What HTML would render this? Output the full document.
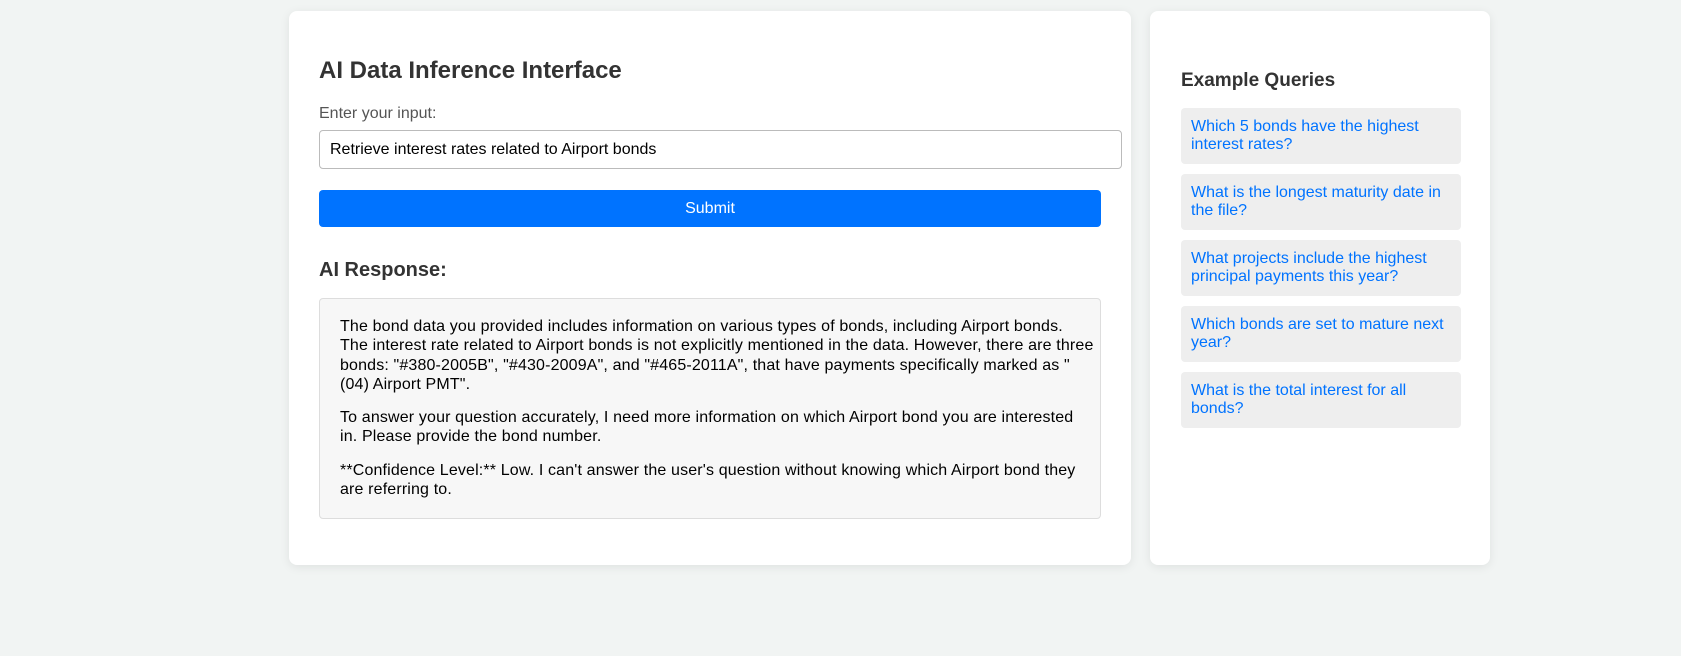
<!DOCTYPE html>
<html><head><meta charset="utf-8"><style>
*{box-sizing:border-box}
body{margin:0;width:1681px;height:656px;background:#f1f4f3;font-family:"Liberation Sans",Arial,sans-serif;position:relative;overflow:hidden}
.card{position:absolute;background:#fff;border-radius:8px;box-shadow:0 2px 10px rgba(0,0,0,0.08)}
.l{left:289px;top:11px;width:842px;height:554px}
.r{left:1150px;top:11px;width:340px;height:554px}
.abs{position:absolute}
h2{margin:0;font-size:24px;color:#333;font-weight:bold}
h3{margin:0;font-size:19px;color:#333;font-weight:bold}
.lab{color:#555;font-size:16px}
.inp{left:30px;top:119px;width:803px;height:39px;border:1px solid #bbb;border-radius:4px;padding:0 10px;line-height:37px;font-size:16px;color:#000}
.btn{left:30px;top:179px;width:782px;height:37px;background:#0073ff;border-radius:4px;color:#fff;text-align:center;line-height:37px;font-size:16px}
.resp{left:30px;top:287px;width:782px;height:221px;background:#f7f7f7;border:1px solid #ddd;border-radius:4px;padding:18px 20px;font-size:16px;letter-spacing:0.15px;line-height:19.3px;color:#000;white-space:nowrap}
.resp p{margin:0 0 14px}
.q{position:absolute;left:31px;width:280px;height:56px;background:#eee;border-radius:4px;padding:10px 10px;color:#0073ff;font-size:16px;line-height:18px}
</style></head><body>
<div class="card l">
<h2 class="abs" style="left:30px;top:46px">AI Data Inference Interface</h2>
<div class="abs lab" style="left:30px;top:94px">Enter your input:</div>
<div class="abs inp">Retrieve interest rates related to Airport bonds</div>
<div class="abs btn">Submit</div>
<h3 class="abs" style="left:30px;top:248px;font-size:20px">AI Response:</h3>
<div class="abs resp">
<p>The bond data you provided includes information on various types of bonds, including Airport bonds.<br>The interest rate related to Airport bonds is not explicitly mentioned in the data. However, there are three<br>bonds: "#380-2005B", "#430-2009A", and "#465-2011A", that have payments specifically marked as "<br>(04) Airport PMT".</p>
<p>To answer your question accurately, I need more information on which Airport bond you are interested<br>in. Please provide the bond number.</p>
<p>**Confidence Level:** Low. I can't answer the user's question without knowing which Airport bond they<br>are referring to.</p>
</div>
</div>
<div class="card r">
<h3 class="abs" style="left:31px;top:59px">Example Queries</h3>
<div class="q" style="top:97px">Which 5 bonds have the highest interest rates?</div>
<div class="q" style="top:163px">What is the longest maturity date in the file?</div>
<div class="q" style="top:229px">What projects include the highest principal payments this year?</div>
<div class="q" style="top:295px">Which bonds are set to mature next year?</div>
<div class="q" style="top:361px">What is the total interest for all bonds?</div>
</div>
</body></html>
